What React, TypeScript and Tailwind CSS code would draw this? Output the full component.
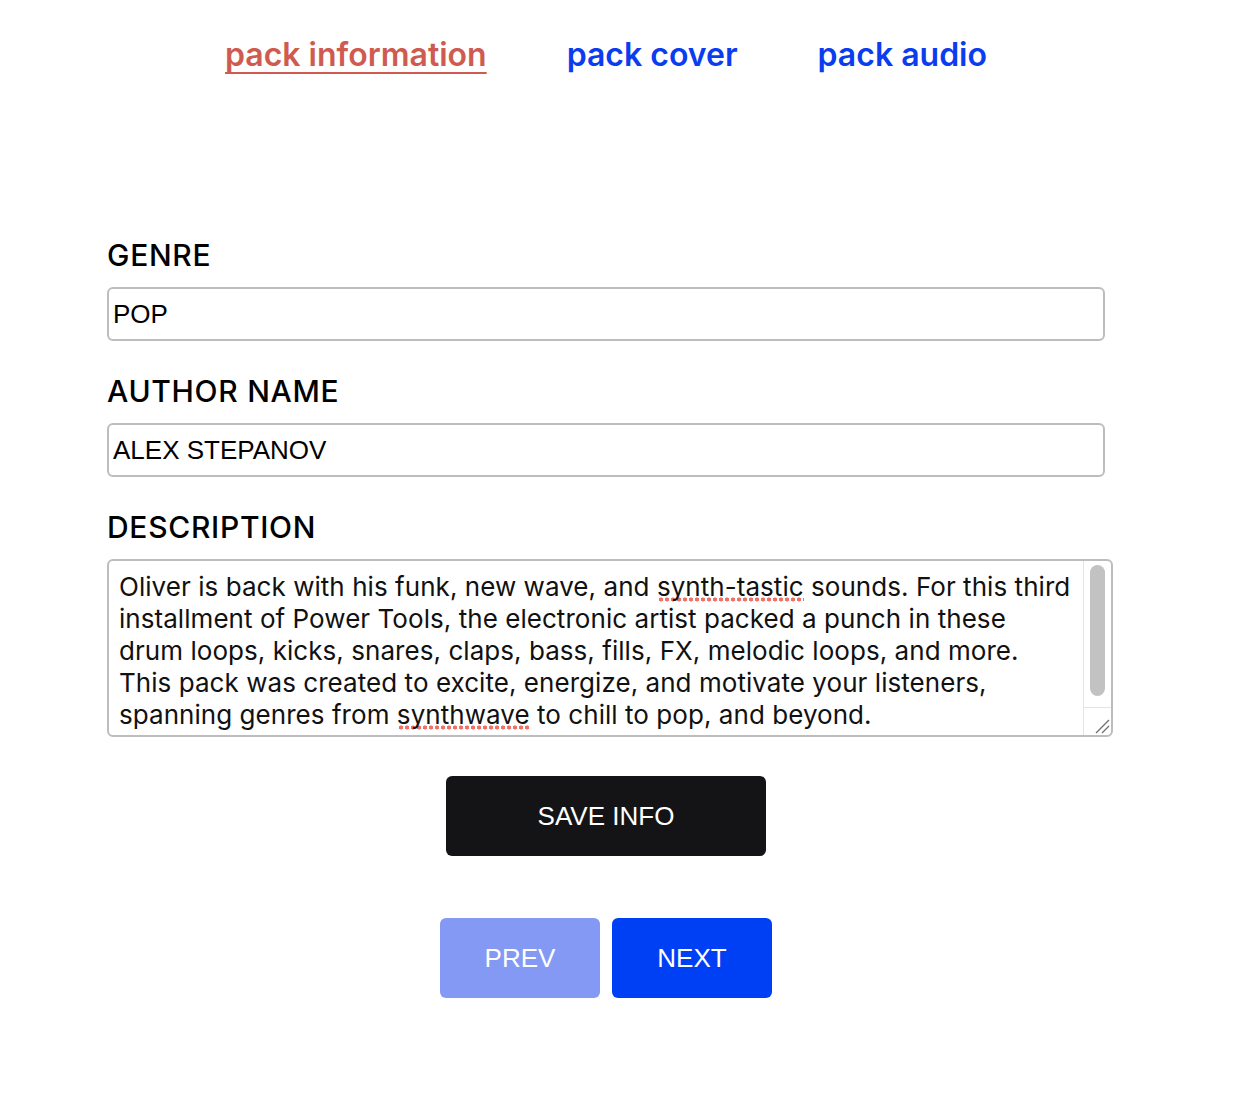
import React from "react";

const sans = "font-['Liberation_Sans',Arial,sans-serif]";

function Label({ children }: { children: React.ReactNode }) {
  return (
    <div className="font-['Inter',sans-serif] font-medium text-[30px] tracking-[0.7px] leading-[34px] text-black mb-[15px]">
      {children}
    </div>
  );
}

function Field({ value }: { value: string }) {
  return (
    <div
      className={`${sans} h-[54px] w-[998px] border-2 border-[#bdbdbd] rounded-[6px] pl-[4px] flex items-center text-[26px] text-black mb-[33px]`}
    >
      {value}
    </div>
  );
}

function Spell({ children }: { children: React.ReactNode }) {
  return (
    <span className="bg-[radial-gradient(circle,#ef7267_1.9px,transparent_2.2px)] bg-[length:6px_5px] bg-repeat-x bg-[position:1px_100%]">
      {children}
    </span>
  );
}

export default function App() {
  return (
    <div className="min-h-[1102px] bg-white">
      <div className="ml-[107px] w-[998px] flex flex-col">
        <nav className="pt-[35px] flex justify-center gap-[80px] font-['Inter',sans-serif] font-semibold text-[32px] leading-[39px]">
          <a className="text-[#cf5b50] underline decoration-2 underline-offset-[6px] [text-decoration-skip-ink:none]">pack information</a>
          <a className="text-[#0a3cf0]">pack cover</a>
          <a className="text-[#0a3cf0]">pack audio</a>
        </nav>

        <div className="mt-[164px]">
          <Label>GENRE</Label>
          <Field value="POP" />
          <Label>AUTHOR NAME</Label>
          <Field value="ALEX STEPANOV" />
          <Label>DESCRIPTION</Label>
          <div className="w-[1006px] h-[178px] border-2 border-[#bdbdbd] rounded-[6px] flex overflow-hidden">
            <div className="flex-1 pl-[10px] pt-[10px] font-['Inter',sans-serif] text-[26px] leading-[32px] tracking-[0.05px] text-[#111] whitespace-nowrap overflow-hidden">
              Oliver is back with his funk, new wave, and <Spell>synth-tastic</Spell> sounds. For this third
              <br />
              installment of Power Tools, the electronic artist packed a punch in these
              <br />
              drum loops, kicks, snares, claps, bass, fills, FX, melodic loops, and more.
              <br />
              This pack was created to excite, energize, and motivate your listeners,
              <br />
              spanning genres from <Spell>synthwave</Spell> to chill to pop, and beyond.
            </div>
            <div className="w-[28px] border-l border-[#e4e4e4] flex flex-col">
              <div className="flex-1 px-[6px] pt-[4px] pb-[11px] flex">
                <div className="flex-1 rounded-full bg-[#c2c2c2]" />
              </div>
              <div className="h-[28px] border-t border-[#e4e4e4] flex items-end justify-end pr-[1px] pb-[1px]">
                <svg width="16" height="16" viewBox="0 0 16 16">
                  <line x1="15" y1="2" x2="2" y2="15" stroke="#6f6f6f" strokeWidth="1.2" />
                  <line x1="15" y1="8" x2="8" y2="15" stroke="#6f6f6f" strokeWidth="1.2" />
                </svg>
              </div>
            </div>
          </div>
        </div>

        <div className="mt-[39px] flex justify-center">
          <button className={`${sans} w-[320px] h-[80px] rounded-[6px] bg-[#141416] text-white text-[26px]`}>
            SAVE INFO
          </button>
        </div>

        <div className="mt-[62px] flex justify-center gap-[12px]">
          <button className={`${sans} w-[160px] h-[80px] rounded-[6px] bg-[#8499f4] text-white text-[26px]`}>
            PREV
          </button>
          <button className={`${sans} w-[160px] h-[80px] rounded-[6px] bg-[#0040f5] text-white text-[26px]`}>
            NEXT
          </button>
        </div>
      </div>
    </div>
  );
}
